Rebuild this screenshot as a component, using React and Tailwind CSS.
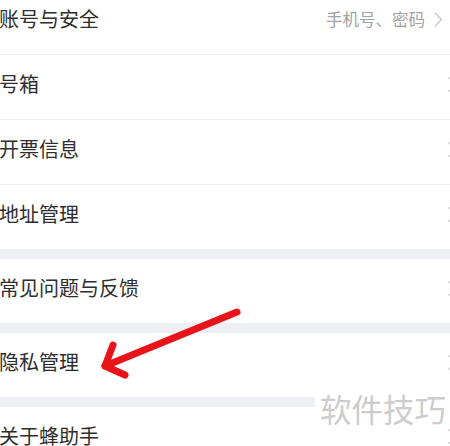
const rows = [
  { label: "账号与安全", note: "手机号、密码" },
  { label: "号箱" },
  { label: "开票信息" },
  { label: "地址管理", gapAfter: true },
  { label: "常见问题与反馈", gapAfter: true },
  { label: "隐私管理", gapAfter: true },
  { label: "关于蜂助手" },
];

function Chevron({ className }) {
  return (
    <svg viewBox="0 0 10 18" className={className} fill="none" stroke="currentColor" strokeWidth="1.4">
      <path d="M1.5 1.5 L8.5 9 L1.5 16.5" />
    </svg>
  );
}

export default function App() {
  return (
    <div
      className="relative w-[450px] h-[446px] overflow-hidden bg-white text-[#2e2e2e]"
      style={{ fontFamily: '"Noto Sans CJK SC", "Noto Sans", sans-serif' }}
    >
      <div className="-mt-[10px]">
        {rows.map((row, idx) => {
          const last = idx === rows.length - 1;
          return (
            <div key={idx}>
              <div className="flex items-center h-[64px] pb-[6px]">
                <span className="text-[20px] leading-none -ml-[1px]">{row.label}</span>
                <div className="ml-auto flex items-center">
                  {row.note && (
                    <>
                      <span className="text-[16.5px] leading-none text-[#a3a3a3] mr-[8px]">{row.note}</span>
                      <Chevron className="w-[10px] h-[17px] text-[#c4c4c4] mr-[7px]" />
                    </>
                  )}
                  {!row.note && <Chevron className="w-[10px] h-[17px] text-[#c4c4c4] -mr-[7px]" />}
                </div>
              </div>
              {!last && (row.gapAfter ? (
                <div className="h-[10px] bg-[#eeeff3]" />
              ) : (
                <div className="h-px bg-[#eeeeee]" />
              ))}
            </div>
          );
        })}
      </div>

      <div className="absolute left-[315px] top-[392px] w-[135px] h-[34px] bg-white flex items-center pl-[5px]">
        <span className="text-[31.5px] leading-none text-[#cdcdcd]">软件技巧</span>
      </div>

      <svg className="absolute inset-0 pointer-events-none" width="450" height="446" viewBox="0 0 450 446">
        <g stroke="#e8141a" strokeWidth="7" strokeLinecap="round" strokeLinejoin="round" fill="none">
          <path d="M237 312 L105 366" />
          <path d="M113 345 L105 366 L125 375" />
        </g>
      </svg>
    </div>
  );
}
